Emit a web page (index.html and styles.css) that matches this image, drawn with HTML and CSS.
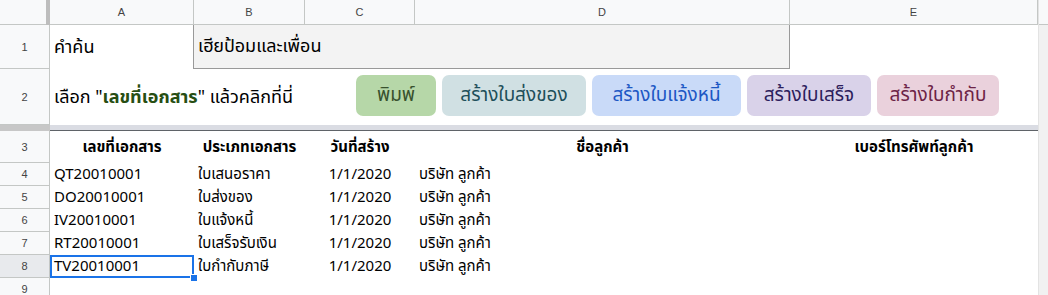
FILE: index.html
```html
<!DOCTYPE html>
<html>
<head>
  <title>ค้นหาเอกสาร</title>
  <link rel="stylesheet" href="styles.css">
</head>
<body>
  <div class="window">
    <div class="sheet">
      <!-- column headers -->
      <div class="corner"></div>
      <div class="freeze-bar"></div>
      <div class="colhead">A</div>
      <div class="colhead">B</div>
      <div class="colhead">C</div>
      <div class="colhead">D</div>
      <div class="colhead">E</div>

      <!-- row 1 -->
      <div class="rowhead">1</div>
      <div class="cell big">คำค้น</div>
      <div class="cell big search">เฮียป้อมและเพื่อน</div>
      <div class="cell"></div>

      <!-- row 2 -->
      <div class="rowhead">2</div>
      <div class="cell big actions">
        <span class="hint">เลือก "<b>เลขที่เอกสาร</b>" แล้วคลิกที่นี่</span>
        <div class="buttons">
          <button class="btn btn-print">พิมพ์</button>
          <button class="btn btn-delivery">สร้างใบส่งของ</button>
          <button class="btn btn-invoice">สร้างใบแจ้งหนี้</button>
          <button class="btn btn-receipt">สร้างใบเสร็จ</button>
          <button class="btn btn-tax">สร้างใบกำกับ</button>
        </div>
      </div>

      <!-- frozen rows divider -->
      <div class="freeze-head"></div>
      <div class="freeze-line"></div>

      <!-- row 3 -->
      <div class="rowhead">3</div>
      <div class="cell th">เลขที่เอกสาร</div>
      <div class="cell th">ประเภทเอกสาร</div>
      <div class="cell th">วันที่สร้าง</div>
      <div class="cell th">ชื่อลูกค้า</div>
      <div class="cell th">เบอร์โทรศัพท์ลูกค้า</div>

      <div class="rowhead">4</div>
      <div class="cell">QT20010001</div>
      <div class="cell">ใบเสนอราคา</div>
      <div class="cell center">1/1/2020</div>
      <div class="cell">บริษัท ลูกค้า</div>
      <div class="cell"></div>

      <div class="rowhead">5</div>
      <div class="cell">DO20010001</div>
      <div class="cell">ใบส่งของ</div>
      <div class="cell center">1/1/2020</div>
      <div class="cell">บริษัท ลูกค้า</div>
      <div class="cell"></div>

      <div class="rowhead">6</div>
      <div class="cell">IV20010001</div>
      <div class="cell">ใบแจ้งหนี้</div>
      <div class="cell center">1/1/2020</div>
      <div class="cell">บริษัท ลูกค้า</div>
      <div class="cell"></div>

      <div class="rowhead">7</div>
      <div class="cell">RT20010001</div>
      <div class="cell">ใบเสร็จรับเงิน</div>
      <div class="cell center">1/1/2020</div>
      <div class="cell">บริษัท ลูกค้า</div>
      <div class="cell"></div>

      <div class="rowhead active">8</div>
      <div class="cell selected">TV20010001</div>
      <div class="cell">ใบกำกับภาษี</div>
      <div class="cell center">1/1/2020</div>
      <div class="cell">บริษัท ลูกค้า</div>
      <div class="cell"></div>

      <div class="rowhead">9</div>
      <div class="cell wide"></div>
    </div>
    <div class="scrollbar">
      <div class="scroll-corner"></div>
    </div>
  </div>
</body>
</html>
```

FILE: styles.css
```css
body {
  margin: 0;
  background-color: #fff;
  font-family: "Noto Sans Thai", "Liberation Sans", "Noto Sans", sans-serif;
  color: #000;
}

.window {
  display: flex;
  width: 1048px;
  height: 295px;
  overflow: hidden;
}

.sheet {
  display: grid;
  grid-template-columns: 46px 4px 144px 111px 110px 375px 248px;
  grid-template-rows: 25px 44px 56px 6px 32px 23px 23px 23px 23px 23px 23px;
  width: 1038px;
}

.scrollbar {
  flex: 1;
  background-color: #f1f1f1;
  border-left: 1px solid #e3e3e3;
}

.scroll-corner {
  height: 25px;
  background-color: #f8f9fa;
  border-bottom: 1px solid #c4c7c5;
  box-sizing: border-box;
}

/* headers */
.corner,
.colhead {
  background-color: #f8f9fa;
  border-bottom: 1px solid #c4c7c5;
}

.freeze-bar {
  background-color: #bdbdbd;
}

.colhead {
  display: flex;
  align-items: center;
  justify-content: center;
  border-right: 1px solid #c4c7c5;
  font-family: "Liberation Sans", Arial, sans-serif;
  font-size: 11px;
  color: #444;
}

.rowhead {
  grid-column: span 2;
  display: flex;
  align-items: center;
  justify-content: center;
  background-color: #f8f9fa;
  border-right: 1px solid #c4c7c5;
  border-bottom: 1px solid #c4c7c5;
  font-family: "Liberation Sans", Arial, sans-serif;
  font-size: 11px;
  color: #444;
}

.rowhead.active {
  background-color: #e8eaed;
}

.freeze-head {
  grid-column: span 2;
  background-color: #c7c7c7;
}

.freeze-line {
  grid-column: span 5;
  background-color: #dadce3;
  border-bottom: 1px solid #5f6368;
}

/* cells */
.cell {
  position: relative;
  display: flex;
  align-items: center;
  padding: 0 4px;
  font-size: 15px;
  white-space: nowrap;
  min-width: 0;
}

.cell.big {
  font-size: 18px;
}

.cell.center {
  justify-content: center;
}

.cell.wide {
  grid-column: span 5;
}

.search {
  grid-column: span 3;
  background-color: #f3f3f3;
  border: 1px solid #999;
  border-top: none;
  margin-left: -1px;
}

.th {
  justify-content: center;
  font-weight: bold;
  font-size: 15px;
}

.actions {
  grid-column: span 5;
}

.hint {
  flex: 0 0 302px;
}

.hint b {
  color: #274e13;
}

.buttons {
  display: flex;
  gap: 6px;
  margin-top: -3px;
}

.btn {
  height: 41px;
  border: none;
  border-radius: 7px;
  font-family: inherit;
  font-size: 19px;
  padding: 0;
  cursor: pointer;
}

.btn-print {
  width: 80px;
  background-color: #b6d7a8;
  color: #38512e;
}

.btn-delivery {
  width: 144px;
  background-color: #d0e0e3;
  color: #1d4f5a;
}

.btn-invoice {
  width: 149px;
  background-color: #c9daf8;
  color: #1c57c4;
}

.btn-receipt {
  width: 124px;
  background-color: #d9d2e9;
  color: #2c1d5c;
}

.btn-tax {
  width: 122px;
  background-color: #ead1dc;
  color: #6d2346;
}

.selected {
  box-shadow: inset 0 0 0 2px #1a73e8;
}

.selected::after {
  content: "";
  position: absolute;
  right: -4px;
  bottom: -4px;
  width: 6px;
  height: 6px;
  background-color: #1a73e8;
  border: 1px solid #fff;
  z-index: 1;
}
```
